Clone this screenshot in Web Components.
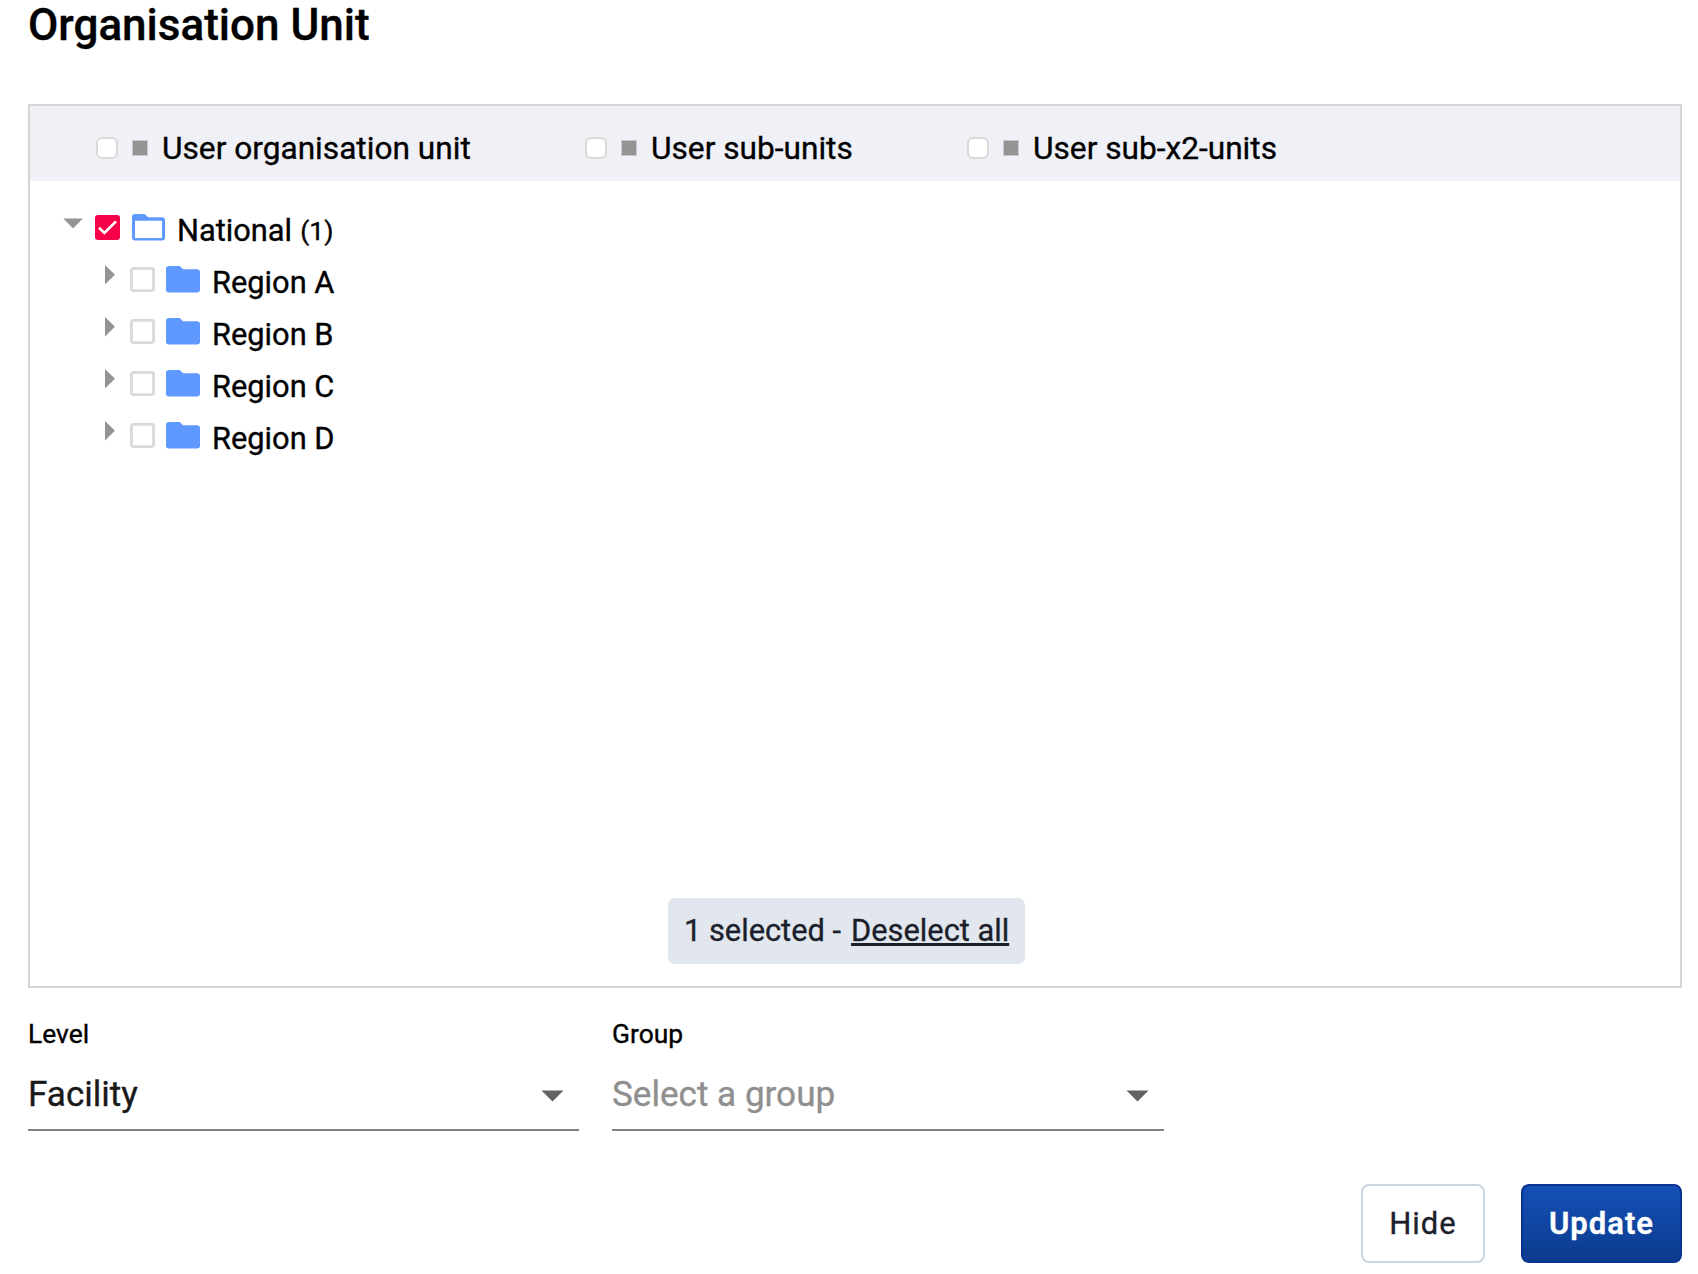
<!DOCTYPE html>
<html lang="en">
<head>
<meta charset="utf-8">
<title>Organisation Unit</title>
<style>
html, body { margin: 0; background: #fff; }
body { font-family: Roboto, "Liberation Sans", sans-serif; color: #000; -webkit-text-stroke: .35px; }
</style>
</head>
<body>
<org-unit-dialog></org-unit-dialog>
<script>
const define = (name, html) => {
  const tpl = document.createElement('template');
  tpl.innerHTML = '<style>*{box-sizing:border-box}</style>' + html;
  customElements.define(name, class extends HTMLElement {
    constructor() {
      super();
      this.attachShadow({ mode: 'open' }).appendChild(tpl.content.cloneNode(true));
    }
  });
};

define('user-unit-option', `
<style>
:host { display: flex; align-items: center; height: 38px; font-size: 31.65px; line-height: 38px; white-space: nowrap; }
.box { width: 22px; height: 22px; border: 2px solid #d9d9d9; border-radius: 6px; background: #fff; margin-right: 13.5px; }
.mark { width: 16px; height: 16px; background: #949494; border: 1px solid #c9c9cd; margin-right: 14.5px; }
.label { padding-top: 1px; }
</style>
<span class="box"></span><span class="mark"></span><span class="label"><slot></slot></span>`);

define('tree-node', `
<style>
:host { display: block; }
.row { display: flex; height: 52px; align-items: flex-start; }
svg { display: block; flex: none; }
.arrow { width: 20px; height: 20px; margin: 10px 12px 0 0; }
.check { width: 25px; height: 25px; margin: 12px 11px 0 0; }
.folder { width: 34px; height: 27px; margin: 11px 12px 0 0; }
.label { font-size: 30.8px; line-height: 36px; padding-top: 10px; white-space: nowrap; }
.kids { padding-left: 35px; }
.open, .on { display: none; }
:host([open]) .open, :host([open]) .on { display: block; }
:host([open]) .closed, :host([open]) .off { display: none; }
</style>
<div class="row">
  <svg class="arrow" viewBox="0 0 20 20" fill="#949494"><path class="open" d="M.3 5.500h19.500L10.100 15.500z"/><path class="closed" d="M7 0 17 9.700 7 19.500z"/></svg>
  <svg class="check" viewBox="0 0 25 25">
    <g class="on"><rect width="25" height="25" rx="3" fill="#f50049"/><path d="m4 12.700 5.400 5.200L21 6.300" fill="none" stroke="#fff" stroke-width="2.600"/></g>
    <rect class="off" x="1.400" y="1.400" width="22.200" height="22.200" rx="2" fill="#fff" stroke="#d9d9d9" stroke-width="2.800"/>
  </svg>
  <svg class="folder" viewBox="0 0 34 27">
    <path class="open" fill="#5f99ff" fill-rule="evenodd" d="M4 0H13.500L17 3.200H31Q34 3.200 34 6.200V23.500Q34 26.500 31 26.500H4Q1 26.500 1 23.500V3Q1 0 4 0zM4 6.700V24H31V6.700z"/>
    <path class="closed" fill="#5f99ff" d="M3 0H13.700L17 3.200H31Q34 3.200 34 6.200V23.500Q34 26.500 31 26.500H3Q0 26.500 0 23.500V3Q0 0 3 0z"/>
  </svg>
  <span class="label"><slot name="label"></slot></span>
</div>
<div class="kids"><slot></slot></div>`);

define('selection-pill', `
<style>
:host { display: flex; width: 357px; height: 66px; padding: 0 0 2px 16px; align-items: center; border-radius: 7px; background: #e2e6ee; color: #1b1f2b; font-size: 30.8px; white-space: pre; box-sizing: border-box; }
a { text-decoration: underline; text-decoration-thickness: 3px; text-underline-offset: 2px; text-decoration-skip-ink: none; margin-left: 10px; }
</style>
<span><slot></slot></span><a><slot name="action"></slot></a>`);

define('select-field', `
<style>
:host { display: block; width: 551px; }
.label { height: 32px; font-size: 26.400px; line-height: 32px; }
.control { display: flex; align-items: center; justify-content: space-between; height: 72px; margin-top: 9px; padding-right: 15px; border-bottom: 2px solid #828282; font-size: 35.100px; color: #1a1a1a; }
:host([empty]) { width: 552px; }
:host([empty]) .value { color: #8f8f8f; }
svg { display: block; margin-top: 4px; }
</style>
<div class="label"><slot name="label"></slot></div>
<div class="control"><span class="value"><slot></slot></span>
<svg width="23" height="12" viewBox="0 0 23 12"><path fill="#636363" d="M.5.500h22L11.500 11.500z"/></svg></div>`);

define('action-button', `
<style>
:host { display: flex; align-items: center; justify-content: center; width: 124px; height: 79px; border: 2px solid #cad5e0; border-radius: 8px; background: #fff; color: #1b212b; font-size: 31px; letter-spacing: 1px; box-sizing: border-box; }
:host([primary]) { width: 161px; border-color: #0a3291; background: linear-gradient(#1550b6, #0b3b8e); color: #fff; font-weight: 600; }
</style>
<span><slot></slot></span>`);

define('org-unit-dialog', `
<style>
:host { display: block; width: 1698px; height: 1274px; padding: 0 16px 0 28px; overflow: hidden; box-sizing: border-box; }
h1 { margin: 0; height: 104px; font-size: 44px; line-height: 50px; font-weight: 500; }
.panel { display: flex; flex-direction: column; height: 884px; border: 2px solid #d5d5d5; }
.options { display: flex; height: 75px; padding: 23px 0 0 66px; background: #f0f1f7; }
.options user-unit-option:nth-child(1) { width: 489px; }
.options user-unit-option:nth-child(2) { width: 382px; }
.tree { flex: 1; padding: 22px 0 0 33px; }
selection-pill { margin: 0 0 22px 638px; }
.fields { display: flex; gap: 33px; padding-top: 30px; }
.actions { display: flex; justify-content: flex-end; gap: 36px; margin-top: 53px; }
small { font-size: 26.500px; vertical-align: 1px; line-height: 1; margin-left: .5px; }
</style>
<h1>Organisation Unit</h1>
<section class="panel">
  <div class="options">
    <user-unit-option>User organisation unit</user-unit-option>
    <user-unit-option>User sub-units</user-unit-option>
    <user-unit-option>User sub-x2-units</user-unit-option>
  </div>
  <div class="tree">
    <tree-node open><span slot="label">National <small>(1)</small></span>
      <tree-node><span slot="label">Region A</span></tree-node>
      <tree-node><span slot="label">Region B</span></tree-node>
      <tree-node><span slot="label">Region C</span></tree-node>
      <tree-node><span slot="label">Region D</span></tree-node>
    </tree-node>
  </div>
  <selection-pill>1 selected -<span slot="action">Deselect all</span></selection-pill>
</section>
<div class="fields">
  <select-field><span slot="label">Level</span>Facility</select-field>
  <select-field empty><span slot="label">Group</span>Select a group</select-field>
</div>
<div class="actions">
  <action-button>Hide</action-button>
  <action-button primary>Update</action-button>
</div>`);
</script>
</body>
</html>
